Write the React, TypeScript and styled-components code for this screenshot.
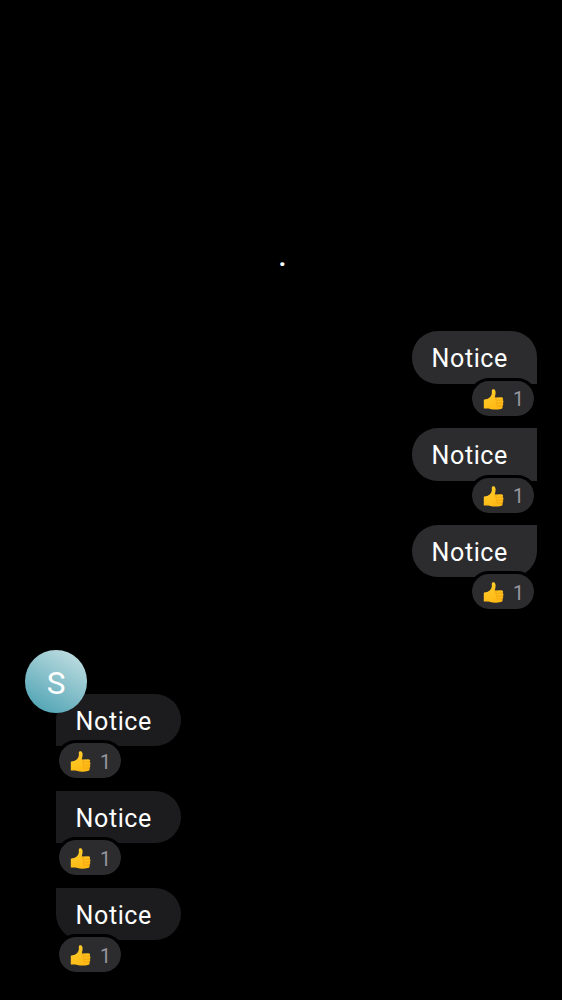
import React from 'react';
import styled, { createGlobalStyle } from 'styled-components';

const GlobalStyle = createGlobalStyle`
  * { box-sizing: border-box; }
  html, body { margin: 0; background: #000; }
  body { font-family: Roboto, sans-serif; color: #fff; }
`;

const Screen = styled.main`
  display: flex;
  flex-direction: column;
  width: 562px;
  height: 1000px;
  overflow: hidden;
  background: #000;
`;

const DateNote = styled.div`
  flex: none;
  padding: 238px 0 0 3px;
  height: 331.3px;
  text-align: center;
  font-size: 30px;
  font-weight: 500;
  line-height: 36px;
`;

const Thread = styled.section<{ $mine?: boolean }>`
  position: relative;
  display: flex;
  flex: none;
  flex-direction: column;
  align-items: ${p => (p.$mine ? 'flex-end' : 'flex-start')};
  gap: 9.3px;
  padding: ${p => (p.$mine ? '0 25px 0 0' : '0 0 0 56px')};
  margin-top: ${p => (p.$mine ? '0' : '81.6px')};
`;

const Message = styled.div<{ $mine?: boolean }>`
  display: flex;
  flex-direction: column;
  align-items: ${p => (p.$mine ? 'flex-end' : 'flex-start')};
  height: 87.5px;
`;

const Bubble = styled.div<{ $mine?: boolean; $radius: string }>`
  width: 125px;
  height: 52.5px;
  flex: none;
  padding-left: 19.6px;
  border-radius: ${p => p.$radius};
  background: ${p => (p.$mine ? '#2c2c2e' : '#1c1c1e')};
  font-size: 25px;
  line-height: 56.5px;
  letter-spacing: 0.6px;
`;

const Reaction = styled.div`
  position: relative;
  display: flex;
  align-items: center;
  width: 68px;
  height: 41px;
  flex: none;
  margin-top: -6.05px;
  padding-left: 10px;
  gap: 7px;
  border: 3px solid #000;
  border-radius: 20px;
  background: #2c2c2e;
  background-clip: padding-box;
  color: #98989f;
`;

const Count = styled.span`
  padding-top: 3px;
  font-size: 19.5px;
  line-height: 35px;
`;

const Avatar = styled.div`
  position: absolute;
  left: 25px;
  top: -43.8px;
  z-index: 1;
  width: 62.4px;
  height: 62.4px;
  border-radius: 50%;
  background: linear-gradient(30deg, #4fa3b4 8%, #c2dfe2 94%);
  text-align: center;
  font-size: 31.5px;
  line-height: 67px;
`;

const ThumbIcon = styled.svg`
  width: 24px;
  height: 24px;
  flex: none;
  margin-top: 3px;
`;

function Thumb() {
  return (
    <ThumbIcon viewBox="0 0 24 24">
      <defs>
        <linearGradient id="skin" x1="0" y1="0" x2="0.5" y2="1">
          <stop offset="0" stopColor="#ffd02f" />
          <stop offset="1" stopColor="#ffb914" />
        </linearGradient>
      </defs>
      <path
        fill="url(#skin)"
        d="M1.8 11.7C4 11.4 6.4 10.9 7.7 9.6C9.4 7.9 10.2 6.1 9.8 3C9.6 .8 13 .6 13.5 3.4C13.9 5.8 13 7.6 12.8 9.4L19.3 9.2C21.1 9.2 21.6 11 20.7 11.9C21.8 12.7 21.7 14.2 20.8 15C21.6 15.9 21.3 17.3 20.4 17.9C21.1 18.9 20.5 20.8 18.8 21C15.2 21.8 11.5 21.9 8.3 20.9C6.2 20.2 4.2 20.6 1.8 20.4Z"
      />
      <path
        fill="none"
        stroke="#e69412"
        strokeWidth="0.5"
        strokeLinecap="round"
        d="M12.8 9.4C14.2 9.2 14.2 11.4 13.6 12M15.6 12.2L20.6 12M15.6 15.2L20.7 15M15.8 18.1L20.2 18M14.8 10.6Q13.4 11.5 14.7 12.5Q13.4 13.8 14.8 15.2Q13.8 16.8 15.2 18.2"
      />
    </ThumbIcon>
  );
}

function Notice({ mine, radius }: { mine?: boolean; radius: string }) {
  return (
    <Message $mine={mine}>
      <Bubble $mine={mine} $radius={radius}>Notice</Bubble>
      <Reaction>
        <Thumb />
        <Count>1</Count>
      </Reaction>
    </Message>
  );
}

export default function App() {
  return (
    <>
      <GlobalStyle />
      <Screen>
        <DateNote>.</DateNote>
        <Thread $mine>
          <Notice mine radius="26px 26px 0 26px" />
          <Notice mine radius="26px 0 0 26px" />
          <Notice mine radius="26px 0 26px 26px" />
        </Thread>
        <Thread>
          <Avatar>S</Avatar>
          <Notice radius="26px 26px 26px 0" />
          <Notice radius="0 26px 26px 0" />
          <Notice radius="0 26px 26px 26px" />
        </Thread>
      </Screen>
    </>
  );
}
